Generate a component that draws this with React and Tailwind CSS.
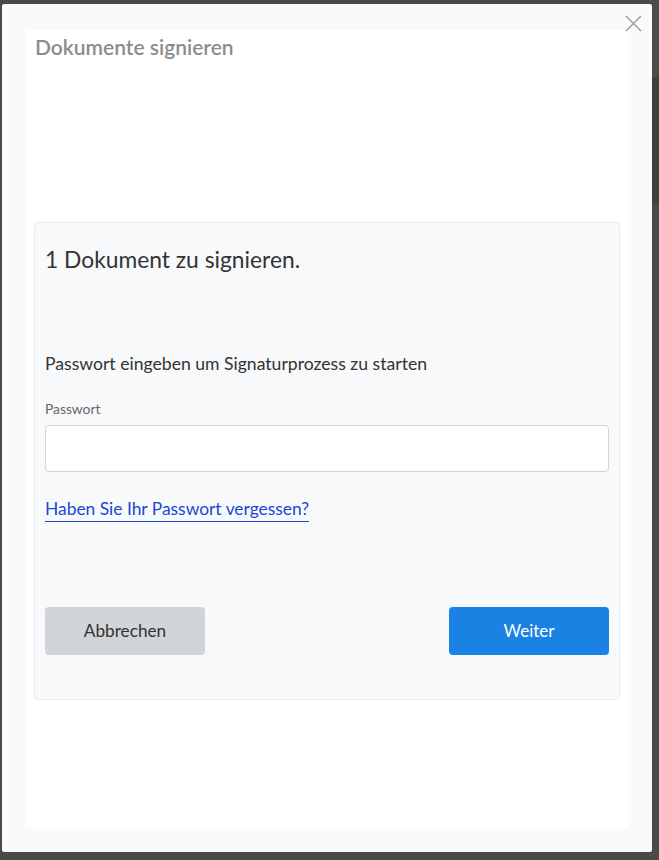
const font = { fontFamily: '"Lato", "Noto Sans", sans-serif' };

function CloseIcon() {
  return (
    <svg width="17" height="17" viewBox="0 0 17 17" fill="none" stroke="currentColor" strokeWidth="1.4">
      <path d="M1 1 L16 16 M16 1 L1 16" />
    </svg>
  );
}

export default function App() {
  return (
    <div className="w-[659px] h-[860px] bg-[#4a4a4a] overflow-hidden flex pt-[4px] pl-[2px]" style={font}>
      <div className="relative w-[650px] h-[848px] bg-[#fafafa] rounded-[2px] pt-[26px] px-[24px] pb-[24px] shrink-0">
        <button className="absolute top-[2px] right-[1px] w-[35px] h-[35px] flex items-center justify-center text-[#9a9a9a]">
          <CloseIcon />
        </button>
        <div className="h-full bg-white px-[8px] pt-[4px]">
          <h1 className="pl-[1px] text-[21px] leading-[25px] font-semibold text-[#8c8c8c]">Dokumente signieren</h1>
          <div className="mt-[163px] h-[478px] bg-[#f8f9fb] border border-[#e9ecef] rounded-[3px] px-[10px] pt-[21px]">
            <div className="text-[22.8px] leading-[30px] text-[#333]">1 Dokument zu signieren.</div>
            <p className="mt-[78px] text-[17.6px] leading-[24px] text-[#333]">
              Passwort eingeben um Signaturprozess zu starten
            </p>
            <label className="block mt-[24px] text-[13.8px] leading-[18px] text-[#666]">Passwort</label>
            <input
              type="password"
              className="block mt-[7px] w-full h-[47px] bg-white border border-[#cfd3d7] rounded-[4px] px-3 outline-none"
            />
            <a href="#" className="inline-block mt-[25px] text-[17.4px] leading-[24px] text-[#1a46d6] border-b border-[#1a46d6]">
              Haben Sie Ihr Passwort vergessen?
            </a>
            <div className="mt-[85px] flex justify-between">
              <button className="w-[160px] h-[48px] rounded-[4px] bg-[#d1d5d9] text-[17.2px] text-[#333]">Abbrechen</button>
              <button className="w-[160px] h-[48px] rounded-[4px] bg-[#1a82e3] text-[17px] text-white">Weiter</button>
            </div>
          </div>
        </div>
      </div>
      <div className="flex-1 flex flex-col -mt-[4px]">
        <div className="h-[77px] bg-[#4b4b4b]" />
        <div className="h-[126px] bg-[#3e3f38]" />
        <div className="flex-1 bg-[#4a4a4a]" />
      </div>
    </div>
  );
}
